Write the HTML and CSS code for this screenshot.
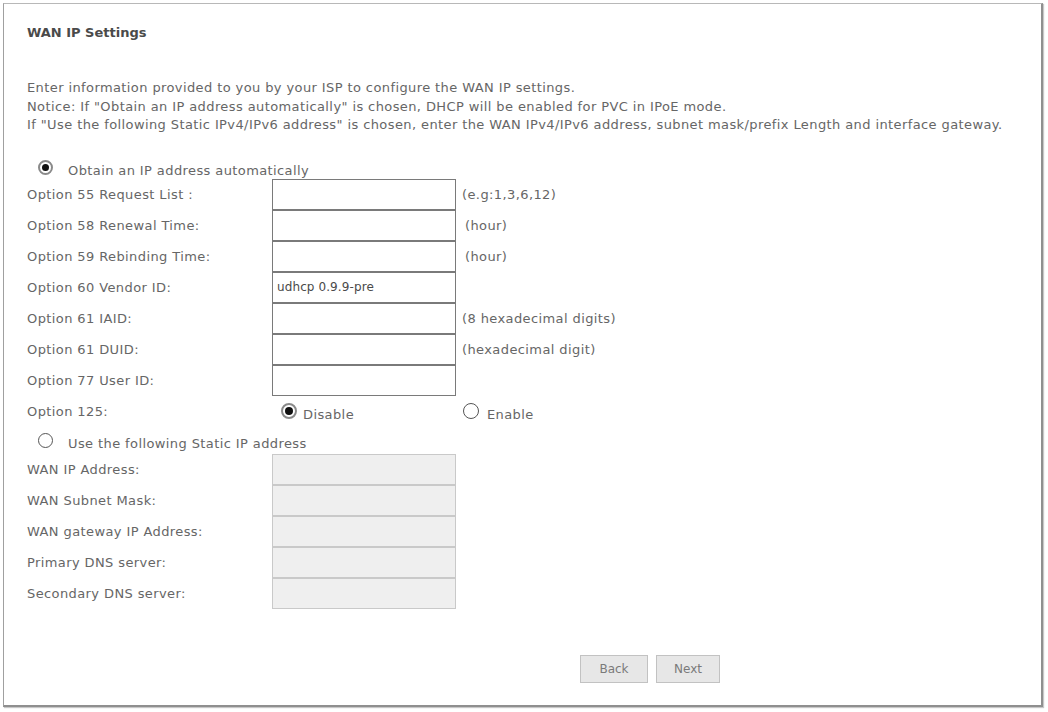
FILE: index.html
```html
<!DOCTYPE html>
<html lang="en">
<head>
    <meta charset="UTF-8">
    <meta name="viewport" content="width=device-width, initial-scale=1.0">
    <title>WAN IP Settings</title>
    <link rel="stylesheet" href="styles.css">
</head>
<body>
    <div class="box">
        <div class="title">WAN IP Settings</div>
        <div class="intro">
            <p>Enter information provided to you by your ISP to configure the WAN IP settings.</p>
            <p>Notice: If "Obtain an IP address automatically" is chosen, DHCP will be enabled for PVC in IPoE mode.</p>
            <p>If "Use the following Static IPv4/IPv6 address" is chosen, enter the WAN IPv4/IPv6 address, subnet mask/prefix Length and interface gateway.</p>
        </div>

        <div class="choice"><span class="radio on"></span>Obtain an IP address automatically</div>
        <div class="grid">
            <div class="label">Option 55 Request List :</div>
            <div class="field"><input type="text"></div>
            <div class="hint h1">(e.g:1,3,6,12)</div>

            <div class="label">Option 58 Renewal Time:</div>
            <div class="field"><input type="text"></div>
            <div class="hint h2">(hour)</div>

            <div class="label">Option 59 Rebinding Time:</div>
            <div class="field"><input type="text"></div>
            <div class="hint h2">(hour)</div>

            <div class="label">Option 60 Vendor ID:</div>
            <div class="field"><input type="text" value="udhcp 0.9.9-pre"></div>
            <div class="hint"></div>

            <div class="label">Option 61 IAID:</div>
            <div class="field"><input type="text"></div>
            <div class="hint">(8 hexadecimal digits)</div>

            <div class="label">Option 61 DUID:</div>
            <div class="field"><input type="text"></div>
            <div class="hint">(hexadecimal digit)</div>

            <div class="label">Option 77 User ID:</div>
            <div class="field"><input type="text"></div>
            <div class="hint"></div>

            <div class="label">Option 125:</div>
            <div class="opt"><span class="radio on big"></span><span class="low">Disable</span></div>
            <div class="opt enable"><span class="radio big"></span><span class="low">Enable</span></div>
        </div>

        <div class="choice second"><span class="radio"></span>Use the following Static IP address</div>
        <div class="grid static">
            <div class="label">WAN IP Address:</div>
            <div class="field"><input type="text" disabled></div>
            <div class="hint"></div>

            <div class="label">WAN Subnet Mask:</div>
            <div class="field"><input type="text" disabled></div>
            <div class="hint"></div>

            <div class="label">WAN gateway IP Address:</div>
            <div class="field"><input type="text" disabled></div>
            <div class="hint"></div>

            <div class="label">Primary DNS server:</div>
            <div class="field"><input type="text" disabled></div>
            <div class="hint"></div>

            <div class="label">Secondary DNS server:</div>
            <div class="field"><input type="text" disabled></div>
            <div class="hint"></div>
        </div>

        <div class="buttons">
            <button class="btn back">Back</button>
            <button class="btn next">Next</button>
        </div>
    </div>
</body>
</html>
```

FILE: styles.css
```css
*{
    padding: 0;
    margin: 0;
    box-sizing: border-box;
}
body{
    background: #fff;
    font-family: "DejaVu Sans", Verdana, sans-serif;
    font-size: 13px;
    letter-spacing: 0.4px;
    color: #666;
    padding: 3px 5px 5px 3px;
}
.box{
    width: 1040px;
    height: 704px;
    border: 1px solid #b8b8b8;
    border-left-color: #a0a0a0;
    border-right: 2px solid #8f8f8f;
    border-bottom: 2px solid #8f8f8f;
    box-shadow: 1px 1px 1px #c8c8c8;
    padding: 22px 0 0 23px;
}
.title{
    font-weight: bold;
    letter-spacing: 0;
    color: #4a4a4a;
    height: 14px;
    line-height: 14px;
}
.intro{
    margin-top: 39px;
}
.intro p{
    line-height: 18.5px;
}
.choice{
    margin-top: 27px;
    height: 18px;
    display: flex;
    align-items: center;
    padding-left: 11px;
}
.choice.second{
    margin-top: 8px;
}
.choice .radio{
    margin-right: 15px;
    top: -3px;
}
.radio{
    display: inline-block;
    width: 15px;
    height: 15px;
    border: 1.5px solid #555;
    border-radius: 50%;
    background: #fff;
    position: relative;
    flex: none;
}
.radio.on{
    border: 2.5px solid #8a8a8a;
}
.radio.on::after{
    content: "";
    position: absolute;
    left: 1.5px;
    top: 1.5px;
    width: 7px;
    height: 7px;
    border-radius: 50%;
    background: #111;
}
.radio.big{
    width: 16px;
    height: 16px;
}
.radio.big.on::after{
    width: 8px;
    height: 8px;
}
.grid{
    display: grid;
    grid-template-columns: 245px 184px auto;
    grid-auto-rows: 31px;
    margin-top: -1px;
}
.label, .hint, .opt{
    display: flex;
    align-items: center;
    white-space: nowrap;
}
.label{
    padding-top: 1px;
}
.hint{
    padding-left: 6px;
}
.hint.h1{
    padding-left: 6px;
}
.hint.h2{
    padding-left: 9px;
}
.field input{
    width: 184px;
    height: 31px;
    border: 1px solid #7a7a7a;
    font-family: "DejaVu Sans", Verdana, sans-serif;
    font-size: 12px;
    letter-spacing: 0.1px;
    color: #4a4a4a;
    padding: 0 4px;
    outline: none;
    background: #fff;
}
.field input:disabled{
    background: #efefef;
    border-color: #c9c9c9;
}
.opt{
    padding-left: 9px;
}
.opt .radio{
    margin-right: 6px;
}
.opt.enable{
    padding-left: 7px;
}
.opt.enable .radio{
    margin-right: 8px;
}
.low{
    position: relative;
    top: 3px;
}
.static{
    margin-top: 1px;
}
.buttons{
    display: flex;
    gap: 8px;
    padding-left: 553px;
    margin-top: 46px;
}
.btn{
    height: 28px;
    border: 1px solid #c2c2c2;
    background: #e7e7e7;
    color: #7a7a7a;
    font-family: "DejaVu Sans", Verdana, sans-serif;
    font-size: 12px;
}
.back{
    width: 68px;
}
.next{
    width: 64px;
}
```
